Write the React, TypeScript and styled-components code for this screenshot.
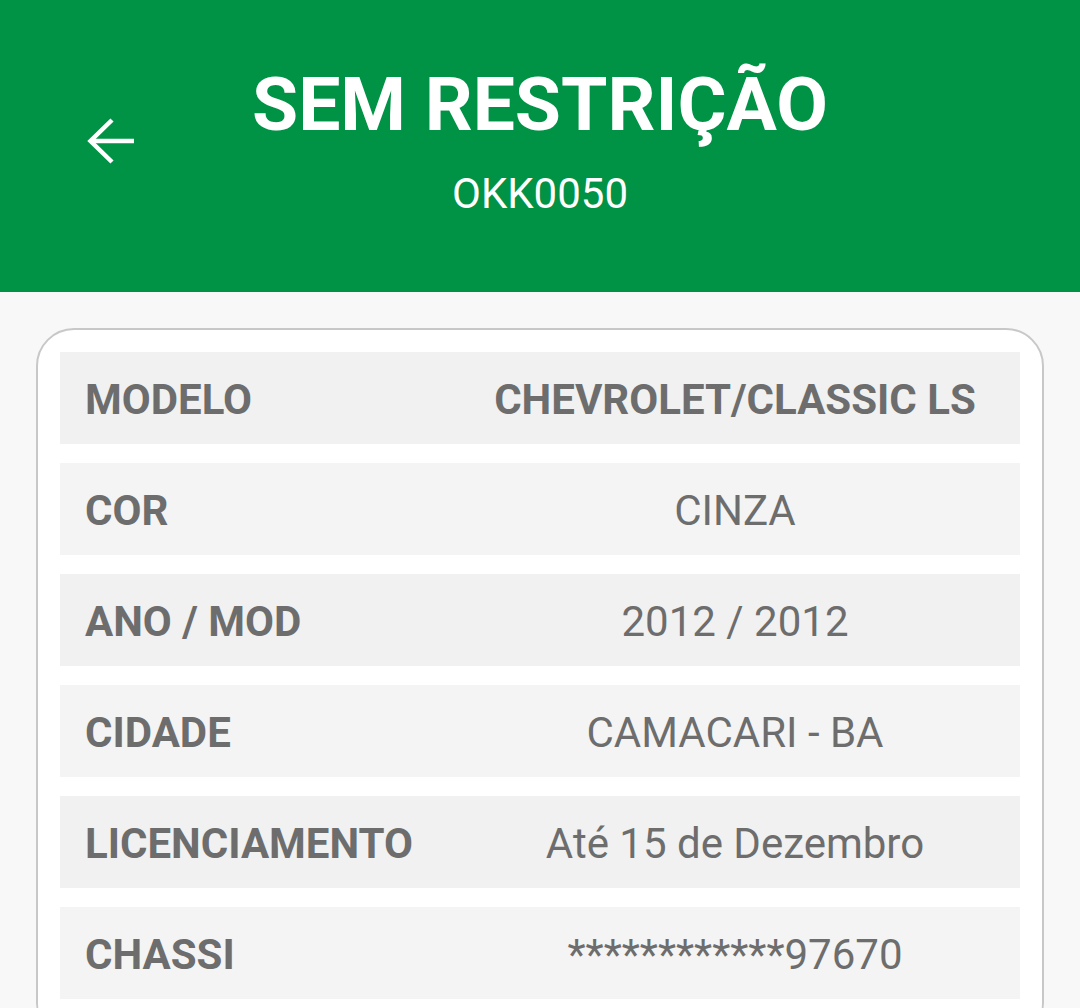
import React from 'react';
import styled, { createGlobalStyle } from 'styled-components';

const GlobalStyle = createGlobalStyle`
    html, body {
        margin: 0;
        padding: 0;
        background: #f8f8f8;
        font-family: Roboto, "Liberation Sans", Arial, sans-serif;
    }
`;

const Page = styled.div`
    min-height: 1008px;
    background: #f8f8f8;
    overflow: hidden;
`;

const Header = styled.header`
    height: 292px;
    box-sizing: border-box;
    background: #009245;
    display: grid;
    grid-template-columns: 1fr auto 1fr;
    padding-top: 60px;
`;

const BackButton = styled.button`
    justify-self: start;
    align-self: start;
    margin: 57px 0 0 86px;
    padding: 0;
    border: 0;
    background: transparent;
    width: 50px;
    height: 48px;
    cursor: pointer;
`;

const TitleBlock = styled.div`
    display: flex;
    flex-direction: column;
    align-items: center;
    color: #ffffff;
`;

const Title = styled.h1`
    margin: 0;
    font-size: 75px;
    line-height: 88px;
    font-weight: 700;
`;

const Plate = styled.div`
    margin-top: 21px;
    font-size: 42px;
    line-height: 50px;
    font-weight: 400;
`;

const Content = styled.main`
    padding: 36px 36px 0;
`;

const Card = styled.section`
    background: #ffffff;
    border: 2px solid #c8c8c8;
    border-radius: 38px;
    padding: 22px 22px 40px;
    display: flex;
    flex-direction: column;
    gap: 19px;
`;

const Row = styled.div<{ $alt: boolean }>`
    display: grid;
    grid-template-columns: 390px 1fr;
    align-items: center;
    box-sizing: border-box;
    height: 92px;
    padding-top: 3px;
    background: ${(p) => (p.$alt ? '#f4f4f4' : '#f1f1f1')};
    color: #6d6d6d;
    font-size: 42px;
`;

const Label = styled.span`
    padding-left: 25px;
    font-weight: 700;
    white-space: nowrap;
`;

const Value = styled.span<{ $strong?: boolean }>`
    text-align: center;
    white-space: nowrap;
    font-weight: ${(p) => (p.$strong ? 700 : 400)};
`;

const rows = [
    { label: 'MODELO', value: 'CHEVROLET/CLASSIC LS', strong: true },
    { label: 'COR', value: 'CINZA' },
    { label: 'ANO / MOD', value: '2012 / 2012' },
    { label: 'CIDADE', value: 'CAMACARI - BA' },
    { label: 'LICENCIAMENTO', value: 'Até 15 de Dezembro' },
    { label: 'CHASSI', value: '************97670' },
];

function App() {
    return (
        <Page>
            <GlobalStyle />
            <Header>
                <BackButton aria-label="Voltar">
                    <svg width="50" height="48" viewBox="0 0 50 48" fill="none">
                        <path d="M48 24H4" stroke="#fff" strokeWidth="4.5" />
                        <path d="M26 3L4.5 24L26 45" stroke="#fff" strokeWidth="4.5" />
                    </svg>
                </BackButton>
                <TitleBlock>
                    <Title>SEM RESTRIÇÃO</Title>
                    <Plate>OKK0050</Plate>
                </TitleBlock>
                <div />
            </Header>
            <Content>
                <Card>
                    {rows.map((r, i) => (
                        <Row key={r.label} $alt={i % 2 === 1}>
                            <Label>{r.label}</Label>
                            <Value $strong={r.strong}>{r.value}</Value>
                        </Row>
                    ))}
                </Card>
            </Content>
        </Page>
    );
}

export default App;
